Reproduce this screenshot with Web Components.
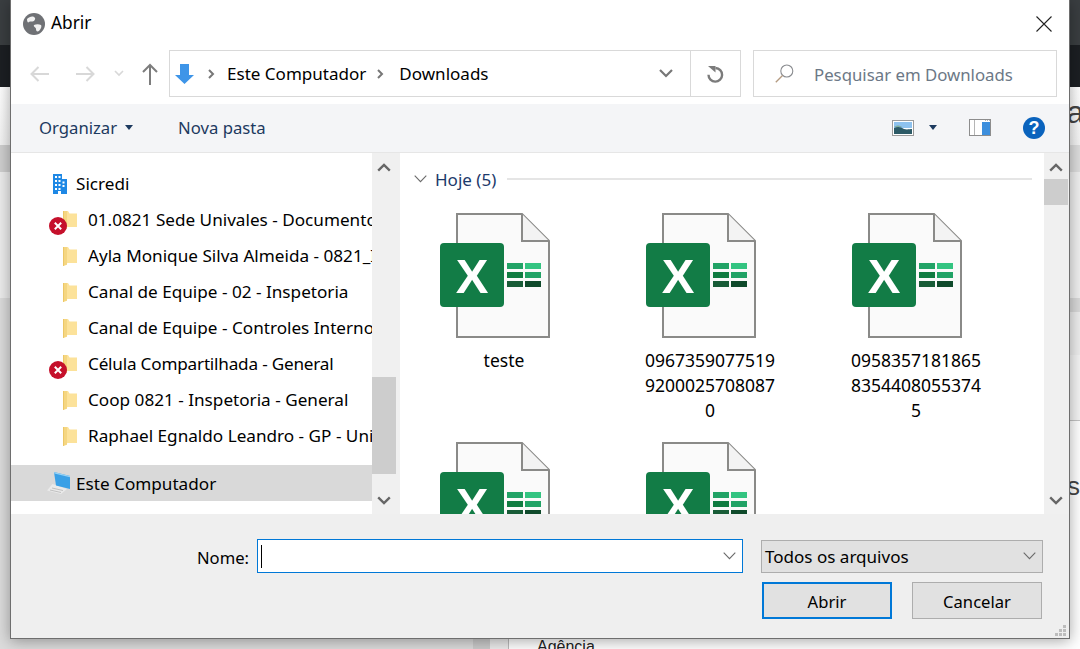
<!DOCTYPE html>
<html lang="pt-br">
<head>
<meta charset="utf-8">
<title>Abrir</title>
<style>
    html, body { margin: 0; padding: 0; width: 1080px; height: 649px; overflow: hidden; background: #fff; }
    body { position: relative; font-family: "Noto Sans", "Open Sans", sans-serif; }
</style>
</head>
<body>
<page-backdrop></page-backdrop>
<file-dialog>
    <dialog-titlebar slot="title">Abrir</dialog-titlebar>
    <dialog-navbar slot="nav"></dialog-navbar>
    <dialog-toolbar slot="tools"></dialog-toolbar>
    <nav-pane slot="side">
        <nav-item kind="building">Sicredi</nav-item>
        <nav-item kind="folder" error>01.0821 Sede Univales - Documentos</nav-item>
        <nav-item kind="folder">Ayla Monique Silva Almeida - 0821_Inspetoria</nav-item>
        <nav-item kind="folder">Canal de Equipe - 02 - Inspetoria</nav-item>
        <nav-item kind="folder">Canal de Equipe - Controles Internos</nav-item>
        <nav-item kind="folder" error style="letter-spacing:-.2px">Célula Compartilhada - General</nav-item>
        <nav-item kind="folder">Coop 0821 - Inspetoria - General</nav-item>
        <nav-item kind="folder">Raphael Egnaldo Leandro - GP - Univales</nav-item>
        <nav-item kind="laptop" selected style="margin-top:11px">Este Computador</nav-item>
    </nav-pane>
    <scroll-bar slot="sidebar" top="224" size="97"></scroll-bar>
    <file-list slot="main" heading="Hoje (5)">
        <file-tile>teste</file-tile>
        <file-tile>09673590775199200025708087 0</file-tile>
        <file-tile>09583571818658354408055374 5</file-tile>
        <file-tile></file-tile>
        <file-tile></file-tile>
    </file-list>
    <scroll-bar slot="mainbar" top="26" size="26"></scroll-bar>
    <dialog-footer slot="footer"></dialog-footer>
</file-dialog>

<script>
    (function () {

        // icones reaproveitados em mais de um componente
        const CHEVRON_THIN = '<svg width="13" height="8" viewBox="0 0 13 8"><path d="M.7.7l5.8 6 5.8-6" fill="none" stroke="#6b6b6b" stroke-width="1.1"/></svg>';
        const CHEVRON_BOLD = '<svg width="14" height="9" viewBox="0 0 14 9"><path d="M1.2 7.6L7 2l5.8 5.6" fill="none" stroke="#666" stroke-width="2.4"/></svg>';

        function define(name, css, html, setup) {
            const template = document.createElement('template');
            template.innerHTML = `<style>${css}</style>${html}`;
            customElements.define(name, class extends HTMLElement {
                constructor() {
                    super();
                    this.attachShadow({ mode: 'open' });
                    this.shadowRoot.appendChild(template.content.cloneNode(true));
                }
                connectedCallback() {
                    if (setup) setup(this, this.shadowRoot);
                }
            });
        }

        // o que aparece por tras da janela
        define('page-backdrop', `
            :host { position: absolute; inset: 0; display: flex; flex-direction: column; overflow: hidden; font-family: "Liberation Sans", sans-serif; color: #444; }
            .top1 { height: 45px; background: #3a3e41; }
            .top2 { height: 42px; background: #1c1f23; }
            .main { flex: 1; display: flex; min-height: 0; }
            .left { width: 473px; display: flex; flex-direction: column; }
            .bar { width: 17px; background: #cbcbcb; }
            .gutter { width: 18px; background: #ececec; }
            .right { flex: 1; display: flex; flex-direction: column; border-left: 1px solid #bbb; min-width: 0; }
            .b { flex: none; }
            .a { height: 58px; background: linear-gradient(#fff, #f4f4f4); text-align: right; font-size: 31px; line-height: 36px; overflow: hidden; }
            .a span { display: block; padding-top: 8px; margin-right: -4px; }
            .rest { flex: 1; background: #fff; display: flex; flex-direction: column; align-items: stretch; min-height: 0; }
            .s { height: 72px; padding-top: 50px; box-sizing: border-box; text-align: right; font-size: 26px; line-height: 30px; }
            .green { margin-top: 119px; height: 2px; background: #7cc24a; }
            .ag { padding: 26px 0 0 28px; font-size: 16px; line-height: 18px; color: #222; }
        `, `
            <div class="top1"></div>
            <div class="top2"></div>
            <div class="main">
                <div class="left">
                    <div class="b" style="height:58px;background:linear-gradient(#fff,#f3f3f3)"></div>
                    <div class="b" style="height:27px;background:#cfcfcf"></div>
                    <div class="b" style="height:126px;background:#ededed"></div>
                    <div style="flex:1;background:#dcdcdc"></div>
                </div>
                <div class="bar"></div>
                <div class="gutter"></div>
                <div class="right">
                    <div class="b a"><span>ra</span></div>
                    <div class="b" style="height:27px;background:#dedede"></div>
                    <div class="b" style="height:126px;background:#f0f0f0"></div>
                    <div class="b" style="height:14px;background:#dadada"></div>
                    <div class="b" style="height:43px;background:#eeeeee"></div>
                    <div class="b" style="height:65px;background:#f4f4f4;border-bottom:1px solid #c4c4c4"></div>
                    <div class="rest">
                        <div class="s">s</div>
                        <div class="green"></div>
                        <div class="ag">Agência</div>
                    </div>
                </div>
            </div>
        `);

        // janela: fica solta sobre o fundo
        define('file-dialog', `
            :host { position: absolute; left: 10px; top: 0; width: 1060px; height: 639px; box-sizing: border-box; display: flex; flex-direction: column;
                    background: #fff; border: 1px solid #6e6e6e; border-top: 0; box-shadow: 0 2px 14px rgba(0,0,0,.35);
                    font-family: "Noto Sans", "Open Sans", sans-serif; font-size: 17.05px; color: #000; }
            .body { display: flex; height: 361px; flex: none; background: #f0f0f0; }
            .split { width: 4px; flex: none; }
            .edge { width: 1px; flex: none; }
        `, `
            <slot name="title"></slot>
            <slot name="nav"></slot>
            <slot name="tools"></slot>
            <div class="body">
                <slot name="side"></slot>
                <slot name="sidebar"></slot>
                <div class="split"></div>
                <slot name="main"></slot>
                <slot name="mainbar"></slot>
                <div class="edge"></div>
            </div>
            <slot name="footer"></slot>
        `);

        define('dialog-titlebar', `
            :host { display: flex; align-items: center; height: 47px; flex: none; padding: 0 17px 0 12px; box-sizing: border-box; }
            svg.globe { margin-right: 6px; }
            .close { margin-left: auto; }
            .txt { font-size: 17.3px; position: relative; top: -1px; }
        `, `
            <svg class="globe" width="22" height="22" viewBox="0 0 22 22">
                <circle cx="11" cy="11" r="11" fill="#6f7175"/>
                <path d="M4 6c2-2 5-3 7-2 2 1 1 3 0 4-2 1-4 0-5 1-1 1-2 0-2-3zM11 12c2-1 5-1 7 0 1 1 0 4-2 6-2 1-3 0-3-2 0-2-3-2-2-4z" fill="#f1f1f1"/>
            </svg>
            <span class="txt"><slot></slot></span>
            <svg class="close" width="16" height="16" viewBox="0 0 16 16"><path d="M.5.5l15 15M15.5.5l-15 15" stroke="#222" stroke-width="1.1" fill="none"/></svg>
        `);

        define('dialog-navbar', `
            :host { display: flex; align-items: center; height: 57px; flex: none; box-sizing: border-box; padding: 3px 0 7px 19px; }
            svg { flex: none; display: block; }
            .addr, .search { height: 47px; box-sizing: border-box; border: 1px solid #d9d9d9; display: flex; align-items: center; background: #fff; flex: none; }
            .addr { width: 572px; margin-left: 11px; padding-left: 5px; }
            .search { width: 304px; margin-left: 12px; padding-left: 21px; color: #6c7886; font-size: 16.8px; }
            .search span { margin-left: 20px; position: relative; top: 1px; }
            .end { margin-left: auto; display: flex; align-items: center; height: 100%; }
            .refresh { width: 49px; height: 100%; border-left: 1px solid #d9d9d9; display: flex; align-items: center; justify-content: center; margin-left: 17px; }
        `, `
            <svg width="19" height="16" viewBox="0 0 19 16"><path d="M19 8H2M8.500 1L1.500 8l7 7" fill="none" stroke="#d8d8d8" stroke-width="2"/></svg>
            <svg style="margin-left:27px" width="19" height="16" viewBox="0 0 19 16"><path d="M0 8h17M10.500 1l7 7-7 7" fill="none" stroke="#d8d8d8" stroke-width="2"/></svg>
            <svg style="margin-left:19px" width="10" height="7" viewBox="0 0 10 7"><path d="M1 1l4 4 4-4" fill="none" stroke="#d8d8d8" stroke-width="1.6"/></svg>
            <svg style="margin-left:18px" width="16" height="22" viewBox="0 0 16 22"><path d="M8 22V2M1 9l7-7 7 7" fill="none" stroke="#7d7d7d" stroke-width="2"/></svg>
            <div class="addr">
                <svg width="19" height="20" viewBox="0 0 19 20"><path d="M5 0h9v11h5l-9.500 9L0 11h5z" fill="#3e95e8"/></svg>
                <svg style="margin-left:14px" width="7" height="10" viewBox="0 0 7 10"><path d="M1 1l4 4-4 4" fill="none" stroke="#777" stroke-width="2"/></svg>
                <span style="margin-left:12px">Este Computador</span>
                <svg style="margin-left:11px" width="7" height="10" viewBox="0 0 7 10"><path d="M1 1l4 4-4 4" fill="none" stroke="#777" stroke-width="2"/></svg>
                <span style="margin-left:15px">Downloads</span>
                <div class="end">
                    <svg width="14" height="9" viewBox="0 0 14 9"><path d="M1 1l6 6 6-6" fill="none" stroke="#777" stroke-width="2.2"/></svg>
                    <div class="refresh">
                        <svg width="17" height="18" viewBox="0 0 17 18"><path d="M8.500 3a6.800 6.800 0 1 1-7 6.800" fill="none" stroke="#7b7b7b" stroke-width="2.4"/><path d="M1 1h7.500v6.500z" fill="#7b7b7b"/></svg>
                    </div>
                </div>
            </div>
            <div class="search">
                <svg width="19" height="19" viewBox="0 0 19 19"><circle cx="11.800" cy="7" r="6" fill="none" stroke="#8a8c90" stroke-width="1.100"/><path d="M7.500 11.500L.8 18.300" stroke="#b39a80" stroke-width="1.300"/></svg>
                <span>Pesquisar em Downloads</span>
            </div>
        `);

        define('dialog-toolbar', `
            :host { display: flex; align-items: center; height: 49px; flex: none; box-sizing: border-box; padding: 0 24px 1px 28px; background: #f4f5f7; border-bottom: 1px solid #e6e6e6; color: #1d3a5f; font-size: 16.7px; }
            svg { flex: none; display: block; }
            .help { width: 22px; height: 22px; border-radius: 50%; background: #0a63bd; color: #fff; font: bold 18px/22px "Liberation Sans", sans-serif; text-align: center; margin-left: 32px; }
        `, `
            <span>Organizar</span>
            <svg style="margin-left:8px" width="8" height="5" viewBox="0 0 8 5"><path d="M0 0h8L4 5z" fill="#1d3a5f"/></svg>
            <span style="margin-left:45px">Nova pasta</span>
            <svg style="margin-left:auto" width="22" height="16" viewBox="0 0 22 16">
                <rect x=".5" y=".5" width="21" height="15" fill="#fff" stroke="#9b9b9b"/>
                <rect x="2" y="2" width="18" height="6" fill="#8ec2ee"/>
                <path d="M2 8c4-2 7-1 10 1 3 1 6 0 8 0v5H2z" fill="#2c5a66"/>
                <path d="M2 7c3-2 5-2 8 0z" fill="#7fae9f"/>
            </svg>
            <svg style="margin-left:15px" width="8" height="5" viewBox="0 0 8 5"><path d="M0 0h8L4 5z" fill="#1d3a5f"/></svg>
            <svg style="margin-left:32px" width="22" height="17" viewBox="0 0 22 17">
                <rect x=".5" y=".5" width="21" height="16" fill="#fff" stroke="#8d8d8d"/>
                <path d="M5.500 1v15" stroke="#b5b5b5"/>
                <rect x="13" y="3" width="8" height="13" fill="#3d8fdd"/>
                <path d="M16 1.500h5" stroke="#b5b5b5" stroke-dasharray="1 1"/>
            </svg>
            <div class="help">?</div>
        `);

        define('nav-pane', `
            :host { display: flex; flex-direction: column; width: 361px; flex: none; padding-top: 13px; box-sizing: border-box; overflow: hidden; background: #fff; font-size: 17.15px; }
        `, `<slot></slot>`);

        const NAV_ICONS = {
            building: `<svg width="14" height="20" viewBox="0 0 14 20"><path d="M0 0h9v5h5v15H8v-3H5v3H0z" fill="#1e88e5"/><path d="M2 2h2v2H2zM5.500 2h2v2h-2zM2 6h2v2H2zM5.500 6h2v2h-2zM2 10h2v2H2zM5.500 10h2v2h-2zM9.500 7.500h2v2h-2zM9.500 11h2v2h-2zM2 14h2v2H2zM5.500 14h2v2h-2z" fill="#fff"/></svg>`,
            folder: `<svg width="14" height="19" viewBox="0 0 14 19"><path d="M0 0h5l1.500 2.500H14v13.500H4.500L3 17.500 0 19z" fill="#fce29a"/><path d="M0 0h4v17.800L0 19z" fill="#f5d681"/><path d="M0 0h1v18.700L0 19z" fill="#ecc766"/></svg>`,
            laptop: `<svg width="24" height="22" viewBox="0 0 24 22"><path d="M5.500 12L0 18.500 14 22l6-5z" fill="#eaeaea"/><path d="M3 18l11 2.500M5 16l11 2.500" stroke="#b5b5b5" stroke-width=".8"/><path d="M7 0l16 4v13L9 13.500z" fill="#3aa0e6"/><path d="M7 0l16 4v1.200L7.400 1.500z" fill="#9ad3f5"/></svg>`
        };

        define('nav-item', `
            :host { display: flex; align-items: center; height: 36px; flex: none; position: relative; white-space: nowrap; overflow: visible; }
            :host([selected]) { background: #d9d9d9; }
            .slot-icon { flex: none; display: flex; justify-content: center; align-items: center; }
            :host([kind=folder]) .slot-icon { margin-left: 52px; width: 14px; margin-right: 11px; }
            :host([kind=building]) .slot-icon { margin-left: 42px; width: 14px; margin-right: 9px; }
            :host([kind=laptop]) .slot-icon { margin-left: 36px; width: 24px; margin-right: 5px; }
            .label { overflow: hidden; flex: 1; min-width: 0; position: relative; top: -1px; }
            :host([selected]) .label { top: 0; }
            .err { position: absolute; left: 38px; top: 15px; width: 18px; height: 18px; }
            .err[hidden] { display: none; }
        `, `
            <span class="slot-icon"></span>
            <span class="label"><slot></slot></span>
            <svg class="err" hidden viewBox="0 0 18 18"><circle cx="9" cy="9" r="9" fill="#c5102b"/><path d="M5.800 5.800l6.400 6.400M12.200 5.800l-6.400 6.400" stroke="#fff" stroke-width="2"/></svg>
        `, (el, root) => {
            root.querySelector('.slot-icon').innerHTML = NAV_ICONS[el.getAttribute('kind')] || '';
            if (el.hasAttribute('error')) root.querySelector('.err').removeAttribute('hidden');
        });

        define('scroll-bar', `
            :host { display: flex; flex-direction: column; width: 24px; flex: none; background: #f0f0f0; }
            .btn { height: 26px; flex: none; box-sizing: border-box; padding-top: 3px; display: flex; align-items: center; justify-content: center; }
            .btn.down { padding: 0 0 2px; }
            .track { flex: 1; min-height: 0; }
            .thumb { background: #cdcdcd; }
            svg.down { transform: scaleY(-1); }
        `, `
            <div class="btn">${CHEVRON_BOLD}</div>
            <div class="track"><div class="thumb"></div></div>
            <div class="btn down">${CHEVRON_BOLD.replace('<svg', '<svg class="down"')}</div>
        `, (el, root) => {
            const thumb = root.querySelector('.thumb');
            thumb.style.marginTop = (el.getAttribute('top') - 26) + 'px';
            thumb.style.height = el.getAttribute('size') + 'px';
        });

        define('file-list', `
            :host { display: block; flex: 1; min-width: 0; overflow: hidden; background: #fff; padding-left: 1px; box-sizing: border-box; }
            .head { display: flex; align-items: center; height: 20px; margin-top: 16px; padding-left: 13px; color: #1d3a6b; }
            .head span { margin-left: 8px; margin-right: 11px; }
            .line { flex: 1; height: 2px; background: #e5e5e5; margin-right: 12px; }
            .grid { display: grid; grid-template-columns: repeat(3, 206px); grid-auto-rows: 229px; margin-top: 24px; }
        `, `
            <div class="head">${CHEVRON_THIN}<span class="title"></span><div class="line"></div></div>
            <div class="grid"><slot></slot></div>
        `, (el, root) => {
            root.querySelector('.title').textContent = el.getAttribute('heading');
        });

        define('file-tile', `
            :host { display: flex; flex-direction: column; align-items: center; }
            svg { display: block; margin-right: 18px; flex: none; }
            .name { width: 135px; margin-top: 10px; font-size: 17.5px; line-height: 25px; text-align: center; word-break: break-all; }
        `, `
            <svg width="110" height="125" viewBox="0 0 110 125">
                <path d="M17 1h65l27 27v96H17z" fill="#fafafa" stroke="#8a8a88" stroke-width="2"/>
                <path d="M82 1v27h27" fill="#f3f3f3" stroke="#8a8a88" stroke-width="2"/>
                <rect x="0" y="30" width="64" height="64" rx="4" fill="#127c46"/>
                <text x="32" y="80" text-anchor="middle" font-family="Liberation Sans" font-weight="700" font-size="49" fill="#fff">X</text>
                <rect x="67" y="50" width="16" height="6" fill="#21a366"/><rect x="85" y="50" width="16" height="6" fill="#33c481"/>
                <rect x="67" y="59" width="16" height="6" fill="#107c41"/><rect x="85" y="59" width="16" height="6" fill="#21a366"/>
                <rect x="67" y="68" width="16" height="6" fill="#185c37"/><rect x="85" y="68" width="16" height="6" fill="#0f4a2b"/>
            </svg>
            <div class="name"><slot></slot></div>
        `);

        define('dialog-footer', `
            :host { display: block; flex: 1; position: relative; background: #efefef; padding: 25px 0 0 186px; box-sizing: border-box; }
            .row { display: flex; align-items: center; }
            .lbl { width: 60px; position: relative; top: 1px; font-size: 16.6px; }
            .input { width: 486px; height: 34px; box-sizing: border-box; border: 1px solid #0078d7; background: #fff; display: flex; align-items: center; padding: 0 6px 0 3px; }
            .caret { width: 1px; height: 23px; background: #000; }
            .input svg, .sel svg { margin-left: auto; }
            .sel { width: 282px; height: 33px; margin-left: 18px; box-sizing: border-box; border: 1px solid #adadad; background: #e1e1e1; display: flex; align-items: center; padding: 0 6px 0 3px; }
            .btns { display: flex; margin: 9px 0 0 565px; gap: 20px; }
            .btn { width: 130px; height: 37px; box-sizing: border-box; background: #e1e1e1; border: 1px solid #adadad; display: flex; align-items: center; justify-content: center; padding-top: 2px; font-size: 16.6px; }
            .btn.main { border: 2px solid #0078d7; }
            .grip { position: absolute; right: 3px; bottom: 2px; }
        `, `
            <div class="row">
                <span class="lbl">Nome:</span>
                <div class="input"><div class="caret"></div>${CHEVRON_THIN}</div>
                <div class="sel"><span>Todos os arquivos</span>${CHEVRON_THIN}</div>
            </div>
            <div class="btns">
                <div class="btn main">Abrir</div>
                <div class="btn">Cancelar</div>
            </div>
            <svg class="grip" width="11" height="11" viewBox="0 0 11 11" fill="#bdbdbd"><path d="M8 0h3v3H8zM4 4h3v3H4zM8 4h3v3H8zM0 8h3v3H0zM4 8h3v3H4zM8 8h3v3H8z"/></svg>
        `);

    })();
</script>
</body>
</html>
